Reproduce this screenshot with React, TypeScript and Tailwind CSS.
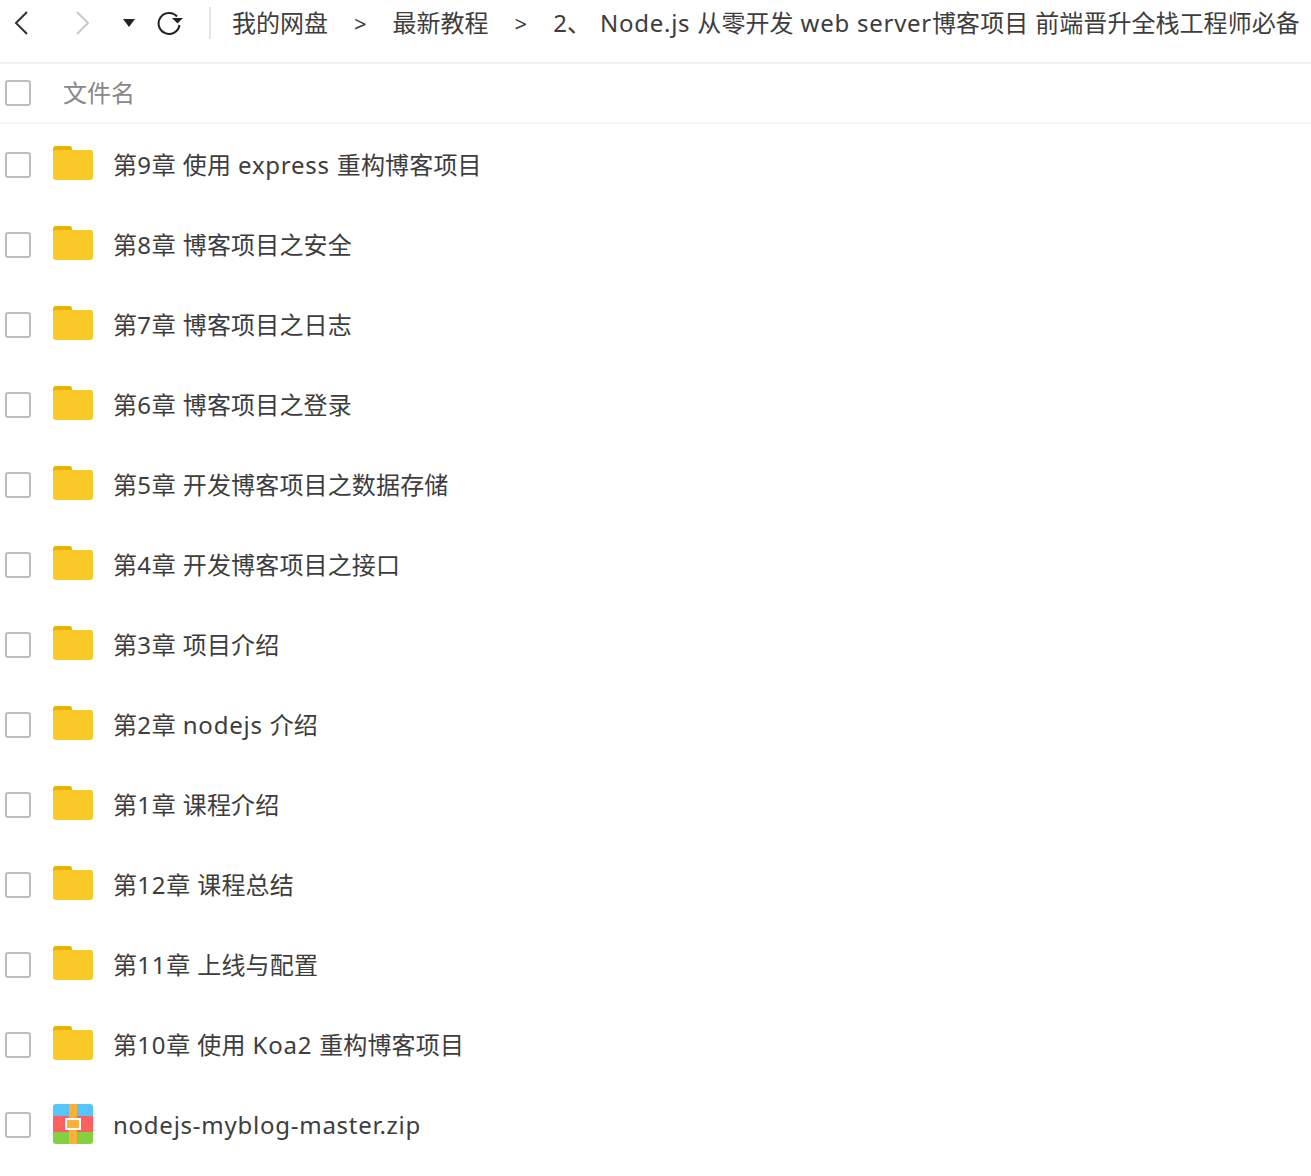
import React from "react";

const folders = [
  "第9章 使用 express 重构博客项目",
  "第8章 博客项目之安全",
  "第7章 博客项目之日志",
  "第6章 博客项目之登录",
  "第5章 开发博客项目之数据存储",
  "第4章 开发博客项目之接口",
  "第3章 项目介绍",
  "第2章 nodejs 介绍",
  "第1章 课程介绍",
  "第12章 课程总结",
  "第11章 上线与配置",
  "第10章 使用 Koa2 重构博客项目",
];

const crumbs = ["我的网盘", "最新教程"];

// Latin runs sit wider than the CJK ones in the original font
function Mixed({ text, cjk }: { text: string; cjk: string }) {
  return (
    <>
      {text.split(/([\x00-\x7f]+)/).map((part, i) =>
        part ? (
          <span key={i} className={/^[\x00-\x7f]/.test(part) ? "tracking-[0.75px]" : cjk}>
            {part}
          </span>
        ) : null
      )}
    </>
  );
}

function Checkbox() {
  return <span className="w-[26px] h-[26px] border-2 border-[#bdbdbd] rounded-[3px] flex-shrink-0 bg-white" />;
}

function FolderIcon() {
  return (
    <svg width="40" height="34" viewBox="0 0 40 34" className="flex-shrink-0 mb-[4px]">
      <path d="M0 3a3 3 0 0 1 3-3h13a3 3 0 0 1 3 3v2H0z" fill="#e9b100" />
      <path d="M0 6a2 2 0 0 1 2-2h36a2 2 0 0 1 2 2v25a3 3 0 0 1-3 3H3a3 3 0 0 1-3-3z" fill="#f9ca27" />
    </svg>
  );
}

function ZipIcon() {
  return (
    <svg width="40" height="40" viewBox="0 0 40 40" className="flex-shrink-0 mb-[2px]">
      <path d="M0 12V3a3 3 0 0 1 3-3h34a3 3 0 0 1 3 3v9z" fill="#55c5fb" />
      <rect x="0" y="12" width="40" height="16" fill="#fc6060" />
      <path d="M0 28h40v9a3 3 0 0 1-3 3H3a3 3 0 0 1-3-3z" fill="#84d03e" />
      <rect x="16" y="0" width="8" height="40" fill="#fbb03b" />
      <rect x="13" y="15" width="14" height="10" fill="#fbb03b" stroke="#ffffff" strokeWidth="2" />
    </svg>
  );
}

function Row({ icon, name }: { icon: React.ReactNode; name: string }) {
  return (
    <li className="h-[80px] flex items-center pl-[5px]">
      <Checkbox />
      <span className="ml-[22px] w-[40px] flex justify-center">{icon}</span>
      <span className="ml-[20px] text-[24px] text-[#3d3d3d] whitespace-nowrap">
        <Mixed text={name} cjk="tracking-[0.15px]" />
      </span>
    </li>
  );
}

export default function App() {
  return (
    <div
      className="w-[1311px] h-[1176px] bg-white overflow-hidden"
      style={{ fontFamily: '"Noto Sans", "Noto Sans CJK SC", sans-serif' }}
    >
      {/* toolbar */}
      <div className="h-[64px] border-b-2 border-[#f0f0f0] flex items-center pb-[16px] text-[24px] text-[#3d3d3d] whitespace-nowrap">
        <svg width="16" height="26" viewBox="0 0 16 26" className="ml-[13px] flex-shrink-0" fill="none" stroke="#333" strokeWidth="2">
          <path d="M14 2 3 13l11 11" />
        </svg>
        <svg width="16" height="26" viewBox="0 0 16 26" className="ml-[46px] flex-shrink-0" fill="none" stroke="#c8c8c8" strokeWidth="2">
          <path d="M2 2l11 11L2 24" />
        </svg>
        <svg width="12" height="8" viewBox="0 0 12 8" className="ml-[32px] flex-shrink-0">
          <path d="M0 0h12L6 8z" fill="#222" />
        </svg>
        <svg width="26" height="24" viewBox="0 0 26 24" className="ml-[22px] flex-shrink-0" fill="none">
          <path d="M20 5.500A10.500 10.500 0 1 0 22.500 14" stroke="#222" strokeWidth="2" />
          <path d="M15 7h11l-5.500 5.500z" fill="#222" />
        </svg>
        <span className="ml-[26px] w-[2px] h-[32px] bg-[#e5e5e5] flex-shrink-0" />
        {crumbs.map((c) => (
          <React.Fragment key={c}>
            <span className="ml-[21px]">{c}</span>
            <span className="ml-[26px] text-[22px] mr-[5px]">&gt;</span>
          </React.Fragment>
        ))}
        <span className="ml-[21px]">2、</span>
        <span className="ml-[9px]">
          <Mixed text="Node.js 从零开发 web server博客项目 前端晋升全栈工程师必备" cjk="tracking-[0.05px]" />
        </span>
      </div>

      {/* header */}
      <div className="h-[60px] border-b-2 border-[#f5f5f5] flex items-center pl-[5px]">
        <Checkbox />
        <span className="ml-[32px] text-[24px] text-[#888888]">文件名</span>
      </div>

      {/* file list */}
      <ul className="pt-[1px]">
        {folders.map((name) => (
          <Row key={name} icon={<FolderIcon />} name={name} />
        ))}
        <Row icon={<ZipIcon />} name="nodejs-myblog-master.zip" />
      </ul>
    </div>
  );
}
